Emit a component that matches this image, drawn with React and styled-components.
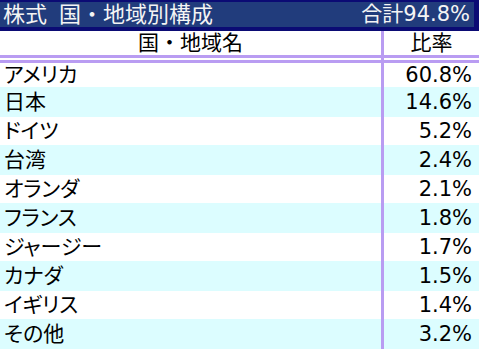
import React from 'react';
import styled, { createGlobalStyle } from 'styled-components';

const GlobalStyle = createGlobalStyle`
  html, body {
    margin: 0;
    padding: 0;
    background: #ffffff;
  }
  body {
    font-family: "DejaVu Sans", "Noto Sans CJK JP", sans-serif;
    font-feature-settings: "palt";
  }
`;

const Panel = styled.section`
  width: 479px;
  height: 351px;
  overflow: hidden;
  background: #ffffff;
`;

const TitleBar = styled.header`
  height: 25px;
  box-sizing: content-box;
  border-top: 2px solid #0b0b74;
  border-bottom: 4px solid #0b0b74;
  border-right: 5px solid #0b0b74;
  background: #213c7c;
  color: #f4f4f4;
  display: flex;
  justify-content: space-between;
  align-items: center;
  padding: 0 4px 0 3px;
  font-size: 21px;
  line-height: 25px;
  font-feature-settings: normal;
`;

const Title = styled.span`
  white-space: pre;
  word-spacing: ${(p) => p.$gap || 0}px;
  font-size: ${(p) => p.$size || 21}px;
`;

const Row = styled.div`
  display: grid;
  grid-template-columns: 384px 1fr;
  height: ${(p) => p.$h}px;
  background: ${(p) => (p.$tint ? '#dcfdff' : '#ffffff')};
  font-size: 21px;
  color: #000000;
`;

const Cell = styled.div`
  box-sizing: border-box;
  display: flex;
  align-items: center;
  justify-content: ${(p) => p.$align || 'flex-start'};
  padding: ${(p) => (p.$align === 'flex-end' ? '0 7px 0 0' : '0 0 0 4px')};
  border-right: ${(p) => (p.$rule ? '3px solid #b99cf2' : 'none')};
  line-height: 1;
`;

const HeadRow = styled(Row)`
  font-feature-settings: normal;

  ${Cell} {
    justify-content: center;
    padding: 0;
  }
`;

const DoubleRule = styled.div`
  display: grid;
  grid-template-columns: 384px 1fr;
  height: 2px;
  border-top: 3px solid #b99cf2;
  border-bottom: 3px solid #b99cf2;
`;

const RuleGap = styled.div`
  box-sizing: border-box;
  border-right: 3px solid #b99cf2;
`;

const rows = [
  ['アメリカ', '60.8%'],
  ['日本', '14.6%'],
  ['ドイツ', '5.2%'],
  ['台湾', '2.4%'],
  ['オランダ', '2.1%'],
  ['フランス', '1.8%'],
  ['ジャージー', '1.7%'],
  ['カナダ', '1.5%'],
  ['イギリス', '1.4%'],
  ['その他', '3.2%'],
];

const App = () => {
  return (
    <>
      <GlobalStyle />
      <Panel>
        <TitleBar>
          <Title $gap={5} $size={22}>株式 国・地域別構成</Title>
          <Title>合計94.8%</Title>
        </TitleBar>
        <HeadRow $h={24}>
          <Cell $rule>国・地域名</Cell>
          <Cell>比率</Cell>
        </HeadRow>
        <DoubleRule>
          <RuleGap />
          <div />
        </DoubleRule>
        {rows.map(([name, ratio], i) => (
          <Row key={name} $tint={i % 2 === 1} $h={i === 0 ? 24 : i % 2 ? 30 : 28}>
            <Cell $rule>{name}</Cell>
            <Cell $align="flex-end">{ratio}</Cell>
          </Row>
        ))}
      </Panel>
    </>
  );
};

export default App;
